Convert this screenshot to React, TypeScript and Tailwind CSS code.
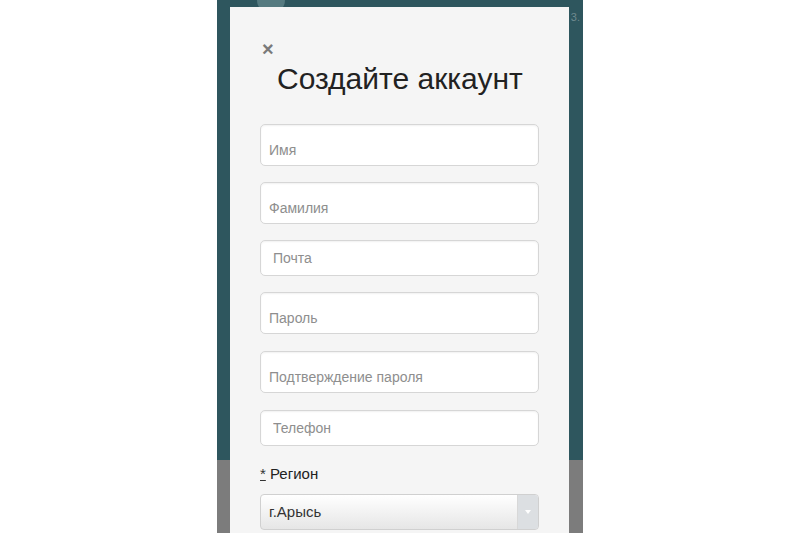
import React from "react";

const tallFields = ["Имя", "Фамилия"];

function Field({ label, tall }: { label: string; tall?: boolean }) {
  return (
    <input
      placeholder={label}
      readOnly
      className={
        tall
          ? "block h-[42px] w-full rounded-[5px] border border-[#d6d6d6] bg-white pl-[8px] pt-[14px] pb-[4px] text-[14px] text-[#333] shadow-[inset_0_1px_2px_rgba(0,0,0,0.06)] outline-none placeholder:text-[#8e8e8e]"
          : "block h-[36px] w-full rounded-[5px] border border-[#d6d6d6] bg-white pl-[12px] text-[14px] text-[#333] shadow-[inset_0_1px_2px_rgba(0,0,0,0.06)] outline-none placeholder:text-[#8e8e8e]"
      }
    />
  );
}

export default function App() {
  return (
    <div
      className="flex h-[533px] w-full justify-center overflow-hidden bg-white"
      style={{ fontFamily: '"Liberation Sans", Arial, sans-serif' }}
    >
      <div className="relative h-full w-[366px] bg-[linear-gradient(to_bottom,#2e565e_460px,#7c7c7c_460px)] pl-[13px] pr-[14px] pt-[7px]">
        <span className="absolute left-[40px] top-[-14px] h-[28px] w-[28px] rounded-full bg-[#557a80]" />
        <span className="absolute right-[3px] top-[9px] text-[11px] text-[#6e8a8f]">3.</span>
        <div className="relative h-full bg-[#f5f5f5] px-[30px]">
          <div className="pt-[32px] text-[20px] font-bold leading-[20px] text-[#7a7a7a]">
            <span className="ml-[2px]">×</span>
          </div>
          <h1 className="mt-[3px] pl-[17px] text-[30px] leading-[34px] text-[#222]">Создайте аккаунт</h1>
          <div className="mt-[28px] flex flex-col">
            {tallFields.map((f) => (
              <div key={f} className="mb-[16px]">
                <Field label={f} tall />
              </div>
            ))}
            <div className="mb-[16px]">
              <Field label="Почта" />
            </div>
            <div className="mb-[17px]">
              <Field label="Пароль" tall />
            </div>
            <div className="mb-[17px]">
              <Field label="Подтверждение пароля" tall />
            </div>
            <Field label="Телефон" />
          </div>
          <div className="mt-[19px] text-[15px] leading-[18px] text-[#222]">
            <abbr title="обязательно" className="text-[#333] underline decoration-solid">*</abbr> Регион
          </div>
          <div className="mt-[11px] flex h-[36px] overflow-hidden rounded-[4px] border border-[#d0d0d0] bg-[linear-gradient(to_bottom,#ffffff,#e6e6e6)]">
            <div className="flex flex-1 items-center pl-[8px] text-[15px] text-[#333]">г.Арысь</div>
            <div className="flex w-[21px] items-center justify-center border-l border-[#d8d8d8] bg-[#dcdfe2]">
              <span className="h-0 w-0 border-l-[3px] border-r-[3px] border-t-[4px] border-l-transparent border-r-transparent border-t-white" />
            </div>
          </div>
        </div>
      </div>
    </div>
  );
}
